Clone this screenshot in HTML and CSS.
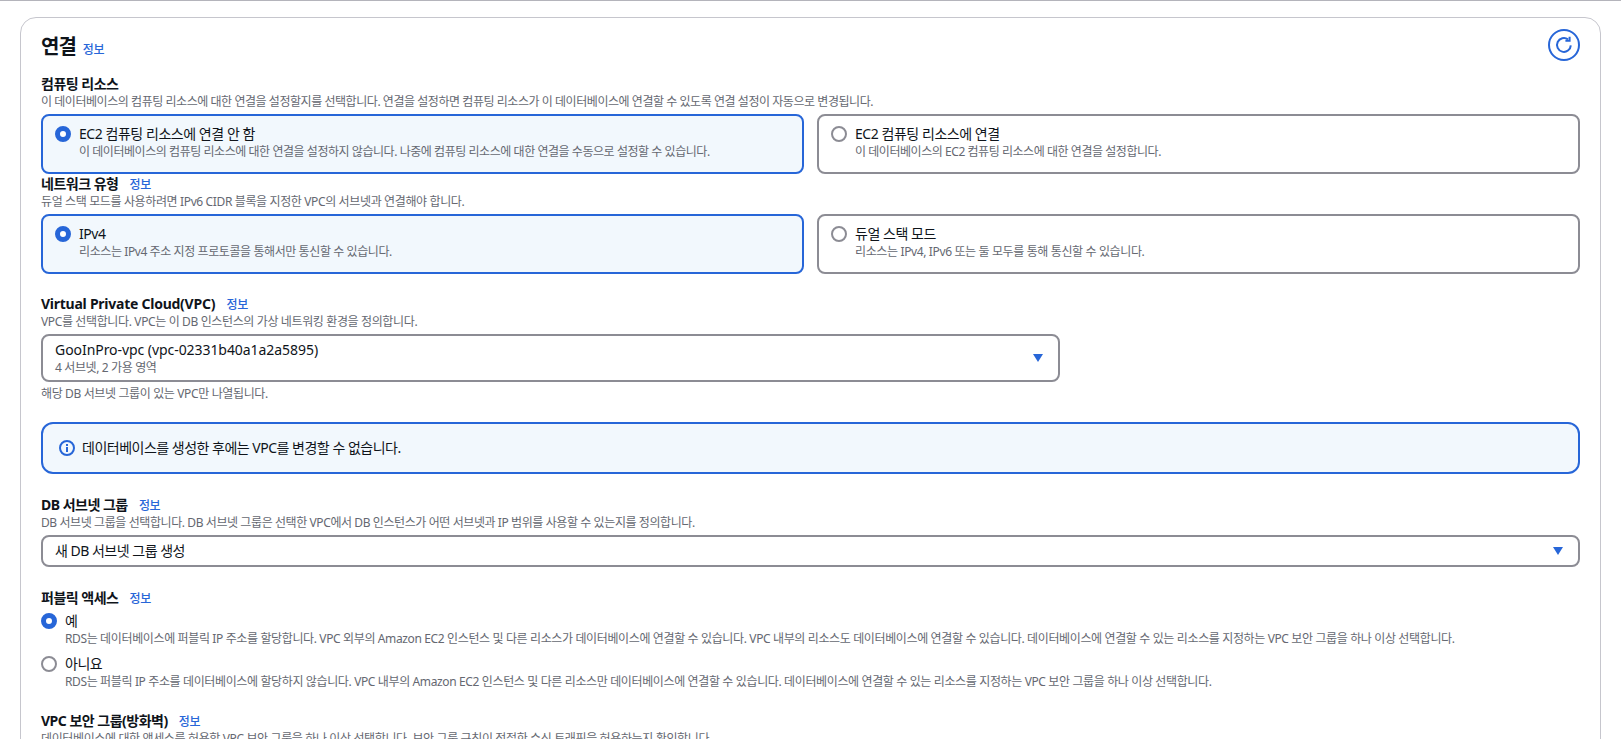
FILE: index.html
```html
<!DOCTYPE html>
<html lang="ko">
<head>
<meta charset="utf-8">
<title>연결</title>
<link rel="stylesheet" href="styles.css">
</head>
<body>
<div class="top-line"></div>
<section class="panel">
  <header class="panel-head">
    <h2 class="panel-title">연결 <a class="info info-title">정보</a></h2>
    <button class="refresh" aria-label="새로 고침">
      <svg viewBox="0 0 18 18" width="18" height="18" fill="none" stroke="currentColor" stroke-width="2"><path d="M15.8 9.4A6.9 6.9 0 1 1 13 3.4"/><path d="M14.6 .8v4H10.4"/></svg>
    </button>
  </header>

  <div class="field f-compute">
    <div class="label">컴퓨팅 리소스</div>
    <div class="desc desc-k">이 데이터베이스의 컴퓨팅 리소스에 대한 연결을 설정할지를 선택합니다. 연결을 설정하면 컴퓨팅 리소스가 이 데이터베이스에 연결할 수 있도록 연결 설정이 자동으로 변경됩니다.</div>
    <div class="tiles">
      <div class="tile selected"><span class="radio on"></span><div><div class="tile-title">EC2 컴퓨팅 리소스에 연결 안 함</div><div class="desc desc-k">이 데이터베이스의 컴퓨팅 리소스에 대한 연결을 설정하지 않습니다. 나중에 컴퓨팅 리소스에 대한 연결을 수동으로 설정할 수 있습니다.</div></div></div>
      <div class="tile"><span class="radio"></span><div><div class="tile-title">EC2 컴퓨팅 리소스에 연결</div><div class="desc desc-k">이 데이터베이스의 EC2 컴퓨팅 리소스에 대한 연결을 설정합니다.</div></div></div>
    </div>
  </div>

  <div class="field f-network">
    <div class="label">네트워크 유형 <a class="info">정보</a></div>
    <div class="desc">듀얼 스택 모드를 사용하려면 IPv6 CIDR 블록을 지정한 VPC의 서브넷과 연결해야 합니다.</div>
    <div class="tiles">
      <div class="tile selected"><span class="radio on"></span><div><div class="tile-title">IPv4</div><div class="desc desc-m">리소스는 IPv4 주소 지정 프로토콜을 통해서만 통신할 수 있습니다.</div></div></div>
      <div class="tile"><span class="radio"></span><div><div class="tile-title">듀얼 스택 모드</div><div class="desc">리소스는 IPv4, IPv6 또는 둘 모두를 통해 통신할 수 있습니다.</div></div></div>
    </div>
  </div>

  <div class="field f-vpc">
    <div class="label label-latin">Virtual Private Cloud(VPC) <a class="info">정보</a></div>
    <div class="desc">VPC를 선택합니다. VPC는 이 DB 인스턴스의 가상 네트워킹 환경을 정의합니다.</div>
    <div class="select select-vpc">
      <div><div class="select-value value-latin">GooInPro-vpc (vpc-02331b40a1a2a5895)</div><div class="desc">4 서브넷, 2 가용 영역</div></div>
      <span class="caret"></span>
    </div>
    <div class="desc hint">해당 DB 서브넷 그룹이 있는 VPC만 나열됩니다.</div>
  </div>

  <div class="flash">
    <svg class="flash-icon" viewBox="0 0 16 16" width="16" height="16" fill="none" stroke="currentColor" stroke-width="2"><circle cx="8" cy="8" r="7"/><path d="M8 7v5M8 4v2"/></svg>
    <span>데이터베이스를 생성한 후에는 VPC를 변경할 수 없습니다.</span>
  </div>

  <div class="field f-subnet">
    <div class="label">DB 서브넷 그룹 <a class="info">정보</a></div>
    <div class="desc desc-m">DB 서브넷 그룹을 선택합니다. DB 서브넷 그룹은 선택한 VPC에서 DB 인스턴스가 어떤 서브넷과 IP 범위를 사용할 수 있는지를 정의합니다.</div>
    <div class="select select-subnet">
      <div class="select-value">새 DB 서브넷 그룹 생성</div>
      <span class="caret"></span>
    </div>
  </div>

  <div class="field f-public">
    <div class="label">퍼블릭 액세스 <a class="info">정보</a></div>
    <div class="choice"><span class="radio on"></span><div><div class="tile-title">예</div><div class="desc">RDS는 데이터베이스에 퍼블릭 IP 주소를 할당합니다. VPC 외부의 Amazon EC2 인스턴스 및 다른 리소스가 데이터베이스에 연결할 수 있습니다. VPC 내부의 리소스도 데이터베이스에 연결할 수 있습니다. 데이터베이스에 연결할 수 있는 리소스를 지정하는 VPC 보안 그룹을 하나 이상 선택합니다.</div></div></div>
    <div class="choice"><span class="radio"></span><div><div class="tile-title">아니요</div><div class="desc">RDS는 퍼블릭 IP 주소를 데이터베이스에 할당하지 않습니다. VPC 내부의 Amazon EC2 인스턴스 및 다른 리소스만 데이터베이스에 연결할 수 있습니다. 데이터베이스에 연결할 수 있는 리소스를 지정하는 VPC 보안 그룹을 하나 이상 선택합니다.</div></div></div>
  </div>

  <div class="field f-sg">
    <div class="label">VPC 보안 그룹(방화벽) <a class="info">정보</a></div>
    <div class="desc">데이터베이스에 대한 액세스를 허용할 VPC 보안 그룹을 하나 이상 선택합니다. 보안 그룹 규칙이 적절한 수신 트래픽을 허용하는지 확인합니다.</div>
  </div>
</section>
</body>
</html>
```
FILE: styles.css
```css
* { box-sizing: border-box; }
html, body { margin: 0; height: 739px; overflow: hidden; background: #fff; }
body { font-family: "Noto Sans", "Noto Sans CJK KR", sans-serif; color: #0f141a; font-size: 14px; line-height: 20px; }

.top-line { height: 1px; background: #b4b4bb; }

.panel { margin: 16px 20px 0; border: 1px solid #c6c6cd; border-radius: 16px; padding: 0 20px; height: 800px; }

.panel-head { display: flex; justify-content: space-between; align-items: flex-start; height: 56px; }
.panel-title { margin: 0; padding-top: 17px; font-size: 20px; line-height: 24px; font-weight: 700; letter-spacing: -1px; display: flex; align-items: baseline; gap: 7px; }
.refresh { width: 32px; height: 32px; margin-top: 11px; border: 2px solid #2766d8; border-radius: 50%; background: #fff; color: #2766d8; padding: 0; display: flex; align-items: center; justify-content: center; }

.label { font-weight: 700; font-size: 14px; line-height: 20px; letter-spacing: -.5px; }
.label-latin { letter-spacing: -.25px; }
.info { font-size: 12px; line-height: 1; font-weight: 500; letter-spacing: -.35px; color: #2766d8; margin-left: 8px; }
.info-title { margin-left: 0; }
.desc { font-size: 12px; line-height: 16px; color: #656871; letter-spacing: -.37px; }
.desc-m { letter-spacing: -.41px; }
.desc-k { letter-spacing: -.45px; }

.tiles { display: grid; grid-template-columns: 1fr 1fr; gap: 13px; margin-top: 4px; }
.tile { display: flex; gap: 8px; height: 60px; border: 2px solid #8c8c94; border-radius: 8px; padding: 8px 12px; }
.tile.selected { border-color: #2766d8; background: #f2f8fd; }
.tile-title { line-height: 20px; letter-spacing: -.45px; }

.radio { flex: none; width: 16px; height: 16px; border: 2px solid #8c8c94; border-radius: 50%; margin-top: 2px; background: #fff; }
.radio.on { border: 5px solid #2766d8; }

.f-vpc { margin-top: 20px; }
.f-subnet { margin-top: 21px; }
.f-public { margin-top: 21px; }
.f-sg { margin-top: 21px; }

.select { display: flex; justify-content: space-between; align-items: center; border: 2px solid #8c8c94; border-radius: 8px; padding: 0 12px; margin-top: 4px; background: #fff; }
.select-vpc { width: 1019px; height: 48px; }
.select-subnet { height: 32px; }
.select-value { line-height: 20px; letter-spacing: -.5px; }
.value-latin { letter-spacing: -.06px; }
.caret { width: 0; height: 0; border-left: 5.5px solid transparent; border-right: 5.5px solid transparent; border-top: 8px solid #2766d8; margin-right: 3px; }
.hint { margin-top: 4px; }

.flash { display: flex; align-items: center; gap: 7px; height: 52px; margin-top: 20px; padding: 0 16px; border: 2px solid #2766d8; border-radius: 12px; background: #f2f8fd; letter-spacing: -.5px; }
.flash-icon { color: #2766d8; flex: none; }

.choice { display: flex; gap: 8px; margin-top: 3px; min-height: 36px; }
.choice .radio { margin-top: 2px; }
.choice + .choice { margin-top: 7px; }
```
